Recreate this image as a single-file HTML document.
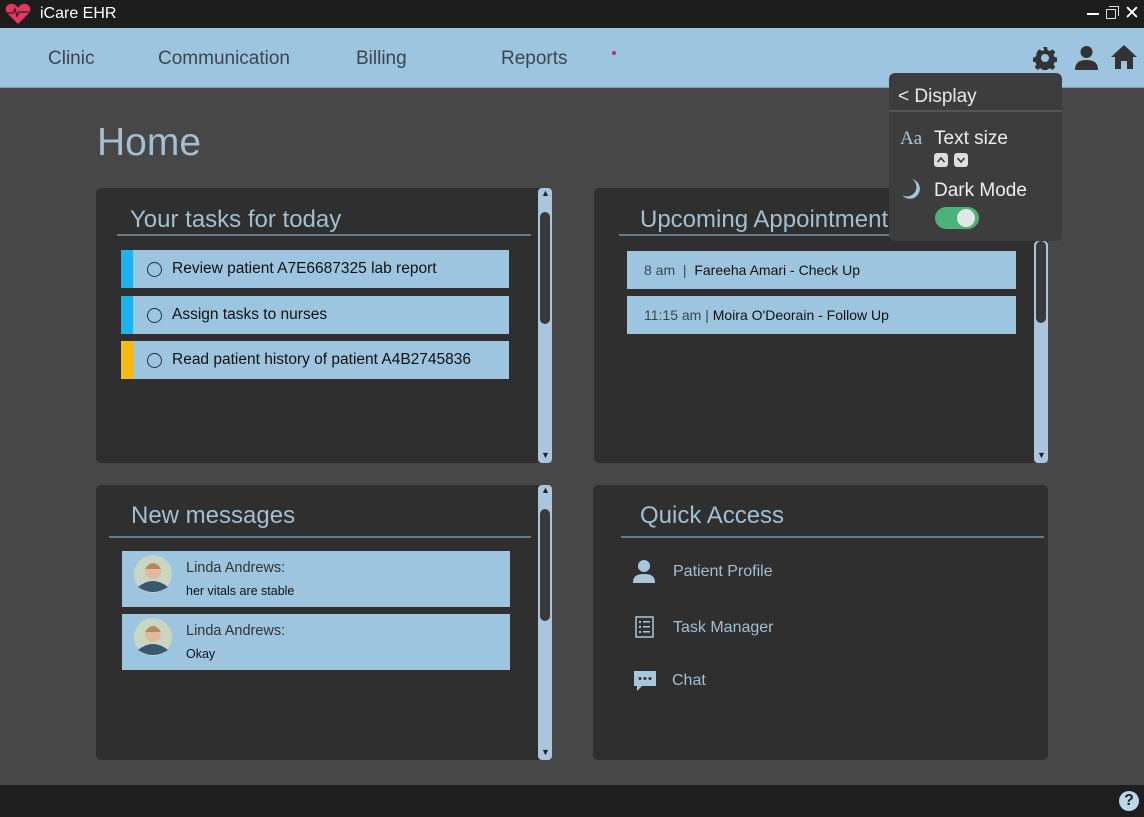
<!DOCTYPE html>
<html><head><meta charset="utf-8"><style>
*{box-sizing:border-box;margin:0;padding:0}
body{width:1144px;height:817px;background:#474747;font-family:"Liberation Sans",sans-serif;position:relative;overflow:hidden}
.abs{position:absolute}
.title{left:0;top:0;width:1144px;height:28px;background:#1d1d1d;color:#fff;font-size:16px}
.nav{left:0;top:28px;width:1144px;height:60px;background:#9ec5df;border-bottom:1px solid #7f9fb5}
.nav span{position:absolute;top:20px;font-size:19px;color:#3a4550}
.card{background:#2f2f2f;border-radius:5px}
.h{position:absolute;font-size:24px;color:#a3bfd2;font-weight:300}
.line{position:absolute;height:2px;background:#6a7a86}
.item{position:absolute;background:#9ec5df;height:38px;font-size:15.5px;color:#111}
.sb{position:absolute;background:#a9c6de;width:14px;border-radius:4px}
.thumb{position:absolute;left:2px;width:10px;background:#3a3a3a;border-radius:5px}
.circ{position:absolute;width:15px;height:15px;border:1.4px solid #1e3445;border-radius:50%}
.ql{position:absolute;font-size:16px;color:#a3bfd2}
</style></head><body>
<div class="abs title">
 <svg class="abs" style="left:5px;top:3px" width="26" height="22" viewBox="0 0 26 22"><path d="M13 21 L2 10 C-1 6 2 0 7 1 C10 1 12 3 13 5 C14 3 16 1 19 1 C24 0 27 6 24 10 Z" fill="#e8365f"/><path d="M2 10 H8 L10 6 L12 13 L14 9 H24" stroke="#222" stroke-width="1.3" fill="none"/></svg>
 <span class="abs" style="left:40px;top:5px">iCare EHR</span>
 <span class="abs" style="left:1087px;top:13px;width:12px;height:2px;background:#fff"></span>
 <span class="abs" style="left:1106px;top:9px;width:10px;height:10px;border:1.5px solid #ddd"></span>
 <span class="abs" style="left:1109px;top:6px;width:10px;height:10px;border-top:1.5px solid #ddd;border-right:1.5px solid #ddd"></span>
 <span class="abs" style="left:1124px;top:2px;font-size:19px;color:#fff">✕</span>
</div>
<div class="abs nav">
 <span style="left:48px">Clinic</span><span style="left:158px">Communication</span><span style="left:356px">Billing</span><span style="left:501px">Reports</span>
 <i class="abs" style="left:612px;top:23px;width:4px;height:4px;border-radius:50%;background:#c0306a"></i>
 <svg class="abs" style="left:1033px;top:18px" width="24" height="24" viewBox="0 0 24 24"><path fill="#333" d="M10 1h4l.6 3 2.3 1 2.6-1.7 2.8 2.8-1.7 2.6 1 2.3 3 .6v4l-3 .6-1 2.3 1.7 2.6-2.8 2.8-2.6-1.7-2.3 1-.6 3h-4l-.6-3-2.3-1-2.6 1.7-2.8-2.8 1.7-2.6-1-2.3-3-.6v-4l3-.6 1-2.3L3.7 6.1l2.8-2.8 2.6 1.7 2.3-1z"/><circle cx="12" cy="12" r="4" fill="#9ec5df"/></svg>
 <svg class="abs" style="left:1074px;top:17px" width="25" height="25" viewBox="0 0 25 25"><circle cx="12.5" cy="7" r="6" fill="#333"/><path d="M1 25 C1 17 6 15 12.5 15 C19 15 24 17 24 25Z" fill="#333"/></svg>
 <svg class="abs" style="left:1110px;top:16px" width="28" height="26" viewBox="0 0 28 26"><path d="M14 1 L1 13 H5 V25 H11 V17 H17 V25 H23 V13 H27 Z" fill="#333"/></svg>
</div>
<div class="abs" style="left:97px;top:121px;font-size:39px;color:#a3bfd2;font-weight:300">Home</div>

<!-- tasks -->
<div class="abs card" style="left:96px;top:188px;width:456px;height:275px">
 <div class="h" style="left:34px;top:18px">Your tasks for today</div>
 <div class="line" style="left:21px;top:46px;width:414px"></div>
 <div class="item" style="left:25px;top:62px;width:388px;border-left:12px solid #1ab4ee"><i class="circ" style="left:14px;top:12px"></i><span class="abs" style="left:39px;top:10px">Review patient A7E6687325 lab report</span></div>
 <div class="item" style="left:25px;top:108px;width:388px;border-left:12px solid #1ab4ee"><i class="circ" style="left:14px;top:12px"></i><span class="abs" style="left:39px;top:10px">Assign tasks to nurses</span></div>
 <div class="item" style="left:25px;top:153px;width:388px;border-left:12px solid #f9b90f"><i class="circ" style="left:14px;top:12px"></i><span class="abs" style="left:39px;top:10px">Read patient history of patient A4B2745836</span></div>
 <div class="sb" style="left:442px;top:0;height:275px"><div class="thumb" style="top:24px;height:112px"></div><span class="abs" style="left:3px;top:0;font-size:9px;color:#222">▲</span><span class="abs" style="left:3px;top:262px;font-size:9px;color:#222">▼</span></div>
</div>

<!-- appointments -->
<div class="abs card" style="left:594px;top:188px;width:454px;height:275px">
 <div class="h" style="left:46px;top:18px;white-space:nowrap">Upcoming Appointment</div>
 <div class="line" style="left:25px;top:46px;width:300px"></div>
 <div class="item" style="left:33px;top:63px;width:389px"><span class="abs" style="left:17px;top:11px;font-size:14px"><span style="color:#3b4650">8 am &nbsp;| </span>&nbsp;Fareeha Amari - Check Up</span></div>
 <div class="item" style="left:33px;top:108px;width:389px"><span class="abs" style="left:17px;top:11px;font-size:14px"><span style="color:#3b4650">11:15 am | </span>Moira O'Deorain - Follow Up</span></div>
 <div class="sb" style="left:440px;top:53px;height:222px"><div class="thumb" style="top:0;height:82px"></div><span class="abs" style="left:3px;top:209px;font-size:9px;color:#222">▼</span></div>
</div>

<!-- messages -->
<div class="abs card" style="left:96px;top:485px;width:456px;height:275px">
 <div class="h" style="left:35px;top:17px">New messages</div>
 <div class="line" style="left:13px;top:51px;width:422px"></div>
 <div class="item" style="left:26px;top:66px;width:388px;height:56px"><svg class="abs" style="left:12px;top:4px" width="38" height="38" viewBox="0 0 38 38"><circle cx="19" cy="19" r="19" fill="#c9d6c2"/><circle cx="19" cy="16" r="8" fill="#e2b99a"/><path d="M11 14 Q19 2 27 14" fill="#b48a5a"/><path d="M4 32 Q19 20 34 32 Q19 42 4 32Z" fill="#3a5670"/></svg><span class="abs" style="left:64px;top:9px;font-size:14.5px;color:#333;font-weight:300">Linda Andrews:</span><span class="abs" style="left:64px;top:33px;font-size:12.5px">her vitals are stable</span></div>
 <div class="item" style="left:26px;top:129px;width:388px;height:56px"><svg class="abs" style="left:12px;top:4px" width="38" height="38" viewBox="0 0 38 38"><circle cx="19" cy="19" r="19" fill="#c9d6c2"/><circle cx="19" cy="16" r="8" fill="#e2b99a"/><path d="M11 14 Q19 2 27 14" fill="#b48a5a"/><path d="M4 32 Q19 20 34 32 Q19 42 4 32Z" fill="#3a5670"/></svg><span class="abs" style="left:64px;top:9px;font-size:14.5px;color:#333;font-weight:300">Linda Andrews:</span><span class="abs" style="left:64px;top:33px;font-size:12.5px">Okay</span></div>
 <div class="sb" style="left:442px;top:0;height:275px"><div class="thumb" style="top:24px;height:112px"></div><span class="abs" style="left:3px;top:0;font-size:9px;color:#222">▲</span><span class="abs" style="left:3px;top:262px;font-size:9px;color:#222">▼</span></div>
</div>

<!-- quick access -->
<div class="abs card" style="left:593px;top:485px;width:455px;height:275px">
 <div class="h" style="left:47px;top:17px">Quick Access</div>
 <div class="line" style="left:28px;top:51px;width:423px"></div>
 <svg class="abs" style="left:40px;top:75px" width="22" height="23" viewBox="0 0 22 23"><circle cx="11" cy="6" r="6" fill="#a9c7dc"/><path d="M0 23 C0 16 4 14 11 14 C18 14 22 16 22 23Z" fill="#a9c7dc"/></svg>
 <span class="ql" style="left:80px;top:78px">Patient Profile</span>
 <svg class="abs" style="left:42px;top:131px" width="19" height="22" viewBox="0 0 19 22"><rect x="1" y="1" width="17" height="20" fill="none" stroke="#a9c7dc" stroke-width="1.5"/><g fill="#a9c7dc"><rect x="4" y="5" width="2" height="2"/><rect x="8" y="5" width="7" height="1.5"/><rect x="4" y="10" width="2" height="2"/><rect x="8" y="10" width="7" height="1.5"/><rect x="4" y="15" width="2" height="2"/><rect x="8" y="15" width="7" height="1.5"/></g></svg>
 <span class="ql" style="left:80px;top:134px">Task Manager</span>
 <svg class="abs" style="left:40px;top:185px" width="24" height="22" viewBox="0 0 24 22"><path d="M1 1 H23 V16 H9 L4 21 V16 H1Z" fill="#a9c7dc"/><g fill="#2f2f2f"><circle cx="7" cy="8.5" r="1.5"/><circle cx="12" cy="8.5" r="1.5"/><circle cx="17" cy="8.5" r="1.5"/></g></svg>
 <span class="ql" style="left:79px;top:187px">Chat</span>
</div>

<!-- popup -->
<div class="abs" style="left:889px;top:73px;width:173px;height:168px;background:#3d3d3d;border-radius:6px">
 <div class="abs" style="left:9px;top:13px;font-size:19px;color:#e8e8e8;font-weight:300">&lt; Display</div>
 <div class="abs" style="left:0;top:37px;width:173px;height:2px;background:#555"></div>
 <div class="abs" style="left:11px;top:55px;font-size:19px;color:#a9c7dc;font-family:'Liberation Serif',serif">Aa</div>
 <div class="abs" style="left:45px;top:55px;font-size:19px;color:#eee;font-weight:300">Text size</div>
 <svg class="abs" style="left:45px;top:80px" width="35" height="15" viewBox="0 0 35 15"><rect x="0" y="0" width="14" height="14" rx="3" fill="#ddd"/><path d="M3.5 9 L7 5 L10.5 9" stroke="#333" stroke-width="1.5" fill="none"/><rect x="20" y="0" width="14" height="14" rx="3" fill="#ddd"/><path d="M23.5 5 L27 9 L30.5 5" stroke="#333" stroke-width="1.5" fill="none"/></svg>
 <svg class="abs" style="left:13px;top:106px" width="18" height="20" viewBox="0 0 18 20"><path d="M10 0 A10 10 0 1 1 0 16 A9 9 0 0 0 10 0Z" fill="#a9c7dc"/></svg>
 <div class="abs" style="left:45px;top:107px;font-size:19px;color:#eee;font-weight:300">Dark Mode</div>
 <div class="abs" style="left:46px;top:134px;width:44px;height:22px;background:#4ab37a;border-radius:11px"><i class="abs" style="left:22px;top:2px;width:18px;height:18px;border-radius:50%;background:#e6e6e6"></i></div>
</div>

<div class="abs" style="left:0;top:785px;width:1144px;height:32px;background:#1e1e1e"></div>
<div class="abs" style="left:1119px;top:791px;width:20px;height:20px;border-radius:50%;background:#bcd6ea;color:#222;font-weight:bold;font-size:16px;text-align:center;line-height:20px">?</div>
</body></html>
